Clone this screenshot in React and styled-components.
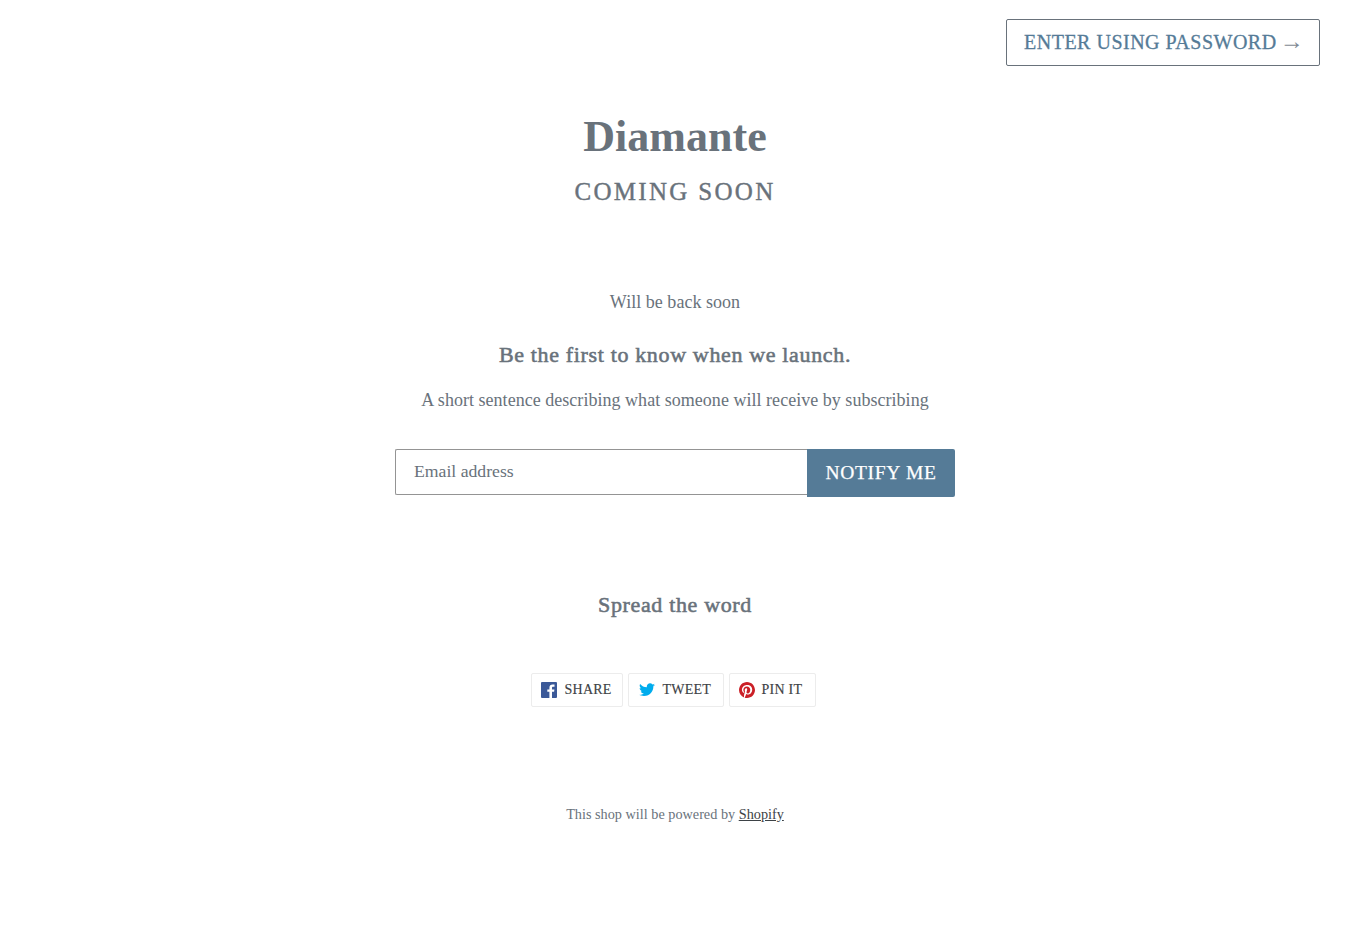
import React from "react";
import styled, { createGlobalStyle } from "styled-components";

const Global = createGlobalStyle`
  html, body { margin: 0; padding: 0; background: #fff; }
  body { font-family: "Liberation Serif", "Times New Roman", serif; color: #69727b; }
  * { box-sizing: border-box; }
`;

const Page = styled.div`
  width: 1350px;
  height: 940px;
  overflow: hidden;
  display: flex;
  flex-direction: column;
`;

const TopBar = styled.header`
  display: flex;
  justify-content: flex-end;
  padding: 19px 30px 0;
`;

const PasswordLink = styled.a`
  display: flex;
  align-items: center;
  width: 314px;
  height: 47px;
  padding-left: 17px;
  border: 1px solid #69727b;
  border-radius: 2px;
  color: #557b97;
  font-size: 20px;
  letter-spacing: 0.5px;
  -webkit-text-stroke: 0.3px #557b97;
  text-transform: uppercase;
  white-space: nowrap;
`;

const Arrow = styled.span`
  margin: 0 0 4px 3px;
  color: #7f8a94;
  font-size: 24px;
  line-height: 20px;
  -webkit-text-stroke: 0;
`;

const Main = styled.main`
  display: flex;
  flex-direction: column;
  align-items: center;
  text-align: center;
`;

const Title = styled.h1`
  margin: 44px 0 0;
  font-size: 44px;
  line-height: 54px;
  font-weight: 700;
  letter-spacing: 0.05px;
  color: #69727b;
`;

const Sub = styled.h2`
  margin: 14px 0 0;
  font-size: 25px;
  line-height: 28px;
  font-weight: 400;
  letter-spacing: 2.3px;
  -webkit-text-stroke: 0.4px #69727b;
  text-transform: uppercase;
  color: #69727b;
`;

const Body = styled.p`
  margin: ${(p) => p.$top}px 0 0;
  font-size: 18px;
  line-height: 24px;
  letter-spacing: 0.03px;
  color: #69727b;
`;

const Heading = styled.h3`
  margin: ${(p) => p.$top}px 0 0;
  font-size: 22px;
  line-height: 27px;
  font-weight: 400;
  letter-spacing: 0.65px;
  -webkit-text-stroke: 0.55px #69727b;
  color: #69727b;
`;

const Form = styled.form`
  display: flex;
  align-items: flex-start;
  width: 560px;
  margin-top: 37px;
`;

const EmailBox = styled.div`
  flex: 1;
  height: 46px;
  display: flex;
  align-items: center;
  padding: 0 18px 1px;
  border: 1px solid #949494;
  border-right: 0;
  border-radius: 2px 0 0 2px;
  font-size: 17.7px;
  color: #69727b;
`;

const Notify = styled.button`
  width: 148px;
  height: 48px;
  border: 0;
  border-radius: 0 2px 2px 0;
  background: #557b97;
  color: #fff;
  font-family: inherit;
  font-size: 19.5px;
  letter-spacing: 0.7px;
  -webkit-text-stroke: 0.25px #fff;
  text-transform: uppercase;
`;

const Socials = styled.div`
  display: flex;
  gap: 5px;
  margin: 55px 4px 0 0;
`;

const Social = styled.a`
  display: flex;
  align-items: center;
  gap: ${(p) => p.$gap}px;
  height: 34px;
  width: ${(p) => p.$w}px;
  padding-left: ${(p) => p.$pad}px;
  border: 1px solid #ececec;
  border-radius: 2px;
  color: #3d4246;
  font-size: 14px;
  letter-spacing: 0.25px;
  -webkit-text-stroke: 0.15px #3d4246;
  text-transform: uppercase;
`;

const Footer = styled.footer`
  margin-top: 96px;
  font-size: 14.25px;
  line-height: 22px;
  color: #69727b;
`;

const FooterLink = styled.a`
  color: #3d4246;
  text-decoration: underline;
`;

const Fb = () => (
  <svg width="16" height="16" viewBox="0 0 16 16" aria-hidden="true">
    <rect width="16" height="16" rx="1" fill="#3b5998" />
    <path fill="#fff" d="M11 16V9.8h2.1l.3-2.4H11V5.9c0-.7.2-1.2 1.2-1.2h1.3V2.5c-.2 0-1-.1-1.9-.1-1.9 0-3.2 1.1-3.2 3.3v1.7H6.3v2.4h2.1V16z" />
  </svg>
);

const Tw = () => (
  <svg width="16" height="14" viewBox="0 0 24 20" aria-hidden="true">
    <path fill="#00aced" d="M24 2.4c-.9.4-1.8.7-2.8.8 1-.6 1.8-1.6 2.2-2.7-1 .6-2 1-3.1 1.2C19.3.7 18 0 16.6 0c-2.7 0-4.9 2.2-4.9 4.9 0 .4 0 .8.1 1.1C7.7 5.8 4.1 3.9 1.7.9c-.4.7-.7 1.6-.7 2.5 0 1.7.9 3.2 2.2 4.1-.8 0-1.6-.2-2.2-.6v.1c0 2.4 1.7 4.4 3.9 4.8-.4.1-.8.2-1.3.2-.3 0-.6 0-.9-.1.6 2 2.4 3.4 4.6 3.4-1.7 1.3-3.8 2.1-6.1 2.1-.4 0-.8 0-1.2-.1C2.2 18.3 4.8 19.1 7.5 19.1c9.1 0 14-7.5 14-14v-.6c1-.7 1.8-1.5 2.5-2.1z" />
  </svg>
);

const Pin = () => (
  <svg width="16" height="16" viewBox="0 0 24 24" aria-hidden="true">
    <path fill="#cb2027" d="M12 0C5.4 0 0 5.4 0 12c0 5.1 3.2 9.4 7.6 11.2-.1-.9-.2-2.4 0-3.4.2-.9 1.4-5.9 1.4-5.9s-.4-.7-.4-1.8c0-1.7 1-2.9 2.2-2.9 1 0 1.5.8 1.5 1.7 0 1-.7 2.6-1 4-.3 1.2.6 2.2 1.8 2.2 2.1 0 3.8-2.2 3.8-5.5 0-2.9-2.1-4.9-5-4.9-3.4 0-5.4 2.6-5.4 5.2 0 1 .4 2.1.9 2.7.1.1.1.2.1.3-.1.4-.3 1.2-.3 1.4-.1.2-.2.3-.4.2-1.5-.7-2.4-2.9-2.4-4.7 0-3.8 2.8-7.3 8-7.3 4.2 0 7.4 3 7.4 6.9 0 4.1-2.6 7.5-6.2 7.5-1.2 0-2.4-.6-2.8-1.4l-.8 2.9c-.3 1-1 2.3-1.5 3.1 1.1.4 2.3.5 3.5.5 6.6 0 12-5.4 12-12S18.6 0 12 0z" />
  </svg>
);

export default function App() {
  return (
    <Page>
      <Global />
      <TopBar>
        <PasswordLink>Enter using password<Arrow>→</Arrow></PasswordLink>
      </TopBar>
      <Main>
        <Title>Diamante</Title>
        <Sub>Coming Soon</Sub>
        <Body $top={84}>Will be back soon</Body>
        <Heading $top={27}>Be the first to know when we launch.</Heading>
        <Body $top={20}>A short sentence describing what someone will receive by subscribing</Body>
        <Form>
          <EmailBox>Email address</EmailBox>
          <Notify type="button">Notify me</Notify>
        </Form>
        <Heading $top={94}>Spread the word</Heading>
        <Socials>
          <Social $w={92} $pad={9} $gap={8}><Fb />Share</Social>
          <Social $w={96} $pad={10} $gap={8}><Tw />Tweet</Social>
          <Social $w={87} $pad={9} $gap={7}><Pin />Pin it</Social>
        </Socials>
        <Footer>This shop will be powered by <FooterLink>Shopify</FooterLink></Footer>
      </Main>
    </Page>
  );
}
